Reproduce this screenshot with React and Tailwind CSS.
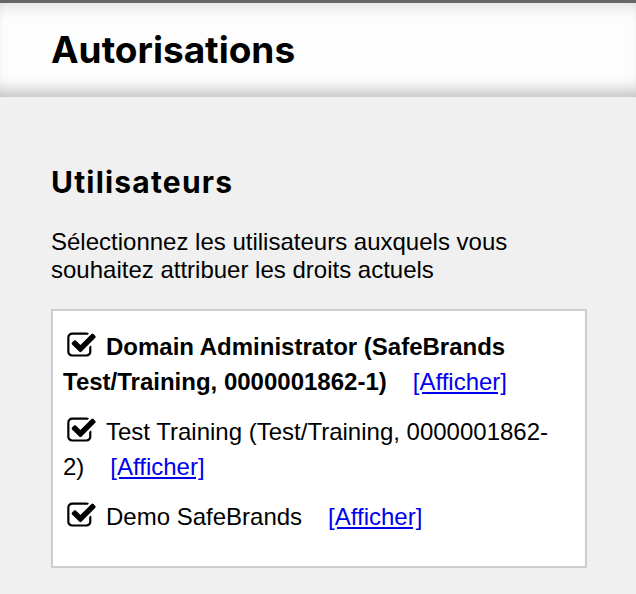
import React from 'react';

const CheckSquareIcon = () => (
  <svg viewBox="0 100 1664 1460" className="w-[29px] h-[25px] inline-block align-[-2px] mr-[10px]" fill="currentColor">
    <path d="M1408 930v318q0 119-84.5 203.5T1120 1536H288q-119 0-203.5-84.5T0 1248V416q0-119 84.5-203.5T288 128h832q63 0 117 25 15 7 18 23 3 17-9 29l-49 49q-10 10-23 10-3 0-9-2-23-6-45-6H288q-66 0-113 47t-47 113v832q0 66 47 113t113 47h832q66 0 113-47t47-113V994q0-13 9-22l64-64q10-10 23-10 6 0 12 3 20 8 20 29zm231-489l-814 814q-24 24-57 24t-57-24L281 825q-24-24-24-57t24-57l110-110q24-24 57-24t57 24l263 263 647-647q24-24 57-24t57 24l110 110q24 24 24 57t-24 57z" />
  </svg>
);

const users = [
  { label: 'Domain Administrator (SafeBrands Test/Training, 0000001862-1)', bold: true },
  { label: 'Test Training (Test/Training, 0000001862-2)', bold: false },
  { label: 'Demo SafeBrands', bold: false },
];

export default function App() {
  return (
    <div className="min-h-[594px] bg-[#f0f0f0] text-black font-['Liberation_Sans',Arial,sans-serif]">
      <header className="border-t-[3px] border-[#666] bg-[#fdfdfd] h-[97px] px-[51px] pt-[24px] shadow-[inset_0_-16px_16px_-10px_rgba(0,0,0,0.25),inset_0_14px_14px_-10px_rgba(0,0,0,0.12)]">
        <h1 className="font-['Inter',sans-serif] font-bold text-[37px] leading-[45px]">Autorisations</h1>
      </header>

      <main className="px-[51px] pt-[67px] pb-[27px]">
        <h2 className="font-['Inter',sans-serif] font-bold text-[30px] leading-[36px] tracking-[1.2px]">Utilisateurs</h2>

        <p className="mt-[28px] text-[24px] leading-[28px] max-w-[520px]">
          Sélectionnez les utilisateurs auxquels vous souhaitez attribuer les droits actuels
        </p>

        <div className="mt-[25px] w-[536px] bg-white border-2 border-[#cdcdcd] pl-[10px] pr-[25px] pt-[18px] pb-[32px] flex flex-col gap-[15px]">
          {users.map((u) => (
            <div key={u.label} className="text-[24px] leading-[35px]">
              <span className="pl-[4px]">
                <CheckSquareIcon />
              </span>
              <span className={u.bold ? 'font-bold' : ''}>{u.label}</span>
              <a href="#" className="ml-[26px] text-[#0000ee] underline">[Afficher]</a>
            </div>
          ))}
        </div>
      </main>
    </div>
  );
}
